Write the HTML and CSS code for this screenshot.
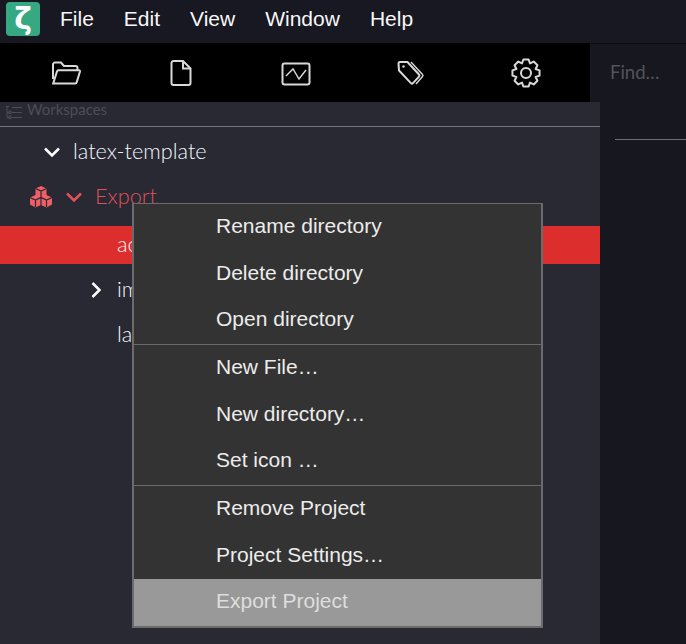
FILE: index.html
```html
<!DOCTYPE html>
<html lang="en">
  <head>
    <meta charset="UTF-8" />
    <meta name="viewport" content="width=device-width, initial-scale=1" />
    <title>Zettlr</title>
    <link rel="stylesheet" href="styles.css">
  </head>
  <body>
    <header class="menubar">
      <div class="logo">ζ</div>
      <nav class="menus">
        <span class="menu-title">File</span>
        <span class="menu-title">Edit</span>
        <span class="menu-title">View</span>
        <span class="menu-title">Window</span>
        <span class="menu-title">Help</span>
      </nav>
    </header>

    <div class="app">
      <div class="toolbar">
        <span class="tool">
          <svg width="32" height="28" viewBox="0 0 32 28"><path d="M3 20V5.500A2 2 0 0 1 5 3.500h6l3 3.500h11.500a2 2 0 0 1 2 2V11" /><path d="M3.200 24.500h22a1.500 1.500 0 0 0 1.500-1.200L30 12.500a1 1 0 0 0-1-1.200H8.500a1.500 1.500 0 0 0-1.500 1.100L3.200 24.500z" /></svg>
        </span>
        <span class="tool">
          <svg width="24" height="28" viewBox="0 0 24 28"><path d="M4.500 2h9.500l7.500 7.500V24a2 2 0 0 1-2 2h-15a2 2 0 0 1-2-2V4a2 2 0 0 1 2-2z" /><path d="M14 2v7.500h7.500" /></svg>
        </span>
        <span class="tool">
          <svg width="30" height="26" viewBox="0 0 30 26"><rect x="1.500" y="3.500" width="27" height="21" rx="2" /><path class="thin" d="M5 16l7-7 6 10 7-9" /></svg>
        </span>
        <span class="tool">
          <svg width="30" height="28" viewBox="0 0 30 28"><path d="M2.500 4.500a1.500 1.500 0 0 1 1.500-1.500h7.500l11.500 12.500a1.500 1.500 0 0 1 0 2.100l-6 6.500a1.500 1.500 0 0 1-2.100 0L3 11.500z" /><path class="thin" d="M15 3l11.500 12.500a1.500 1.500 0 0 1 0 2.100L20 25" /><circle class="dot" cx="7.500" cy="7.500" r="1.200" /></svg>
        </span>
        <span class="tool">
          <svg width="32" height="32" viewBox="-16 -16 32 32"><circle r="5" /><path stroke-linejoin="round" d="M-2.630 -13.550L2.630 -13.550L3.980 -9.610L7.720 -11.440L11.440 -7.720L9.610 -3.980L13.550 -2.630L13.550 2.630L9.610 3.980L11.440 7.720L7.720 11.440L3.980 9.610L2.630 13.550L-2.630 13.550L-3.980 9.610L-7.720 11.440L-11.440 7.720L-9.610 3.980L-13.550 2.630L-13.550 -2.630L-9.610 -3.980L-11.440 -7.720L-7.720 -11.440L-3.980 -9.610z" /></svg>
        </span>
      </div>

      <aside class="sidebar">
        <div class="side-head">
          <svg class="side-icon" width="18" height="15" viewBox="0 0 18 15"><path d="M1 1.500h3M2 1.500v11M7 2.500h10M2 7.500h2M7 7.500h10M2 12.500h2M7 12.500h10" /><rect x="4" y="6" width="2" height="2.500" /><rect x="4" y="11" width="2" height="2.500" /></svg>
          <span class="side-title">Workspaces</span>
        </div>
        <ul class="tree">
          <li class="row">
            <svg class="chev" width="18" height="12" viewBox="0 0 18 12"><path d="M2 2.500l7 7 7-7" /></svg>
            <span class="label">latex-template</span>
          </li>
          <li class="row project">
            <svg class="cubes" width="24" height="22" viewBox="0 0 24 22"><path class="fill" d="M12 0l5.500 2.500v6.500l5.500 2.500v7l-5.500 3-5.500-2.500-5.500 2.500-5.500-3v-7l5.500-2.500v-6.500z" /><path class="cut" d="M6.500 2.500l5.500 2.500 5.500-2.500M12 5v6M1 11.500l5.500 2.500 5.500-2.500 5.500 2.500 5.500-2.500M6.500 14v7M17.500 14v7M12 11.500v8" /></svg>
            <svg class="chev" width="18" height="12" viewBox="0 0 18 12"><path d="M2 2.500l7 7 7-7" /></svg>
            <span class="label">Export</span>
          </li>
          <li class="row child selected"><span class="label">acm.tex</span></li>
          <li class="row child">
            <svg class="chev-right" width="12" height="18" viewBox="0 0 12 18"><path d="M2.500 2l7 7-7 7" /></svg>
            <span class="label">img</span>
          </li>
          <li class="row child"><span class="label">latex.tex</span></li>
        </ul>
      </aside>

      <section class="panel">
        <div class="find">Find…</div>
      </section>
    </div>

    <div class="context-menu">
      <div class="group">
        <div class="item">Rename directory</div>
        <div class="item">Delete directory</div>
        <div class="item">Open directory</div>
      </div>
      <div class="group">
        <div class="item">New File…</div>
        <div class="item">New directory…</div>
        <div class="item">Set icon …</div>
      </div>
      <div class="group">
        <div class="item">Remove Project</div>
        <div class="item">Project Settings…</div>
        <div class="item active">Export Project</div>
      </div>
    </div>
  </body>
</html>
```

FILE: styles.css
```css
html,
body {
  height: 100%;
}
body {
  margin: 0;
  display: flex;
  flex-direction: column;
  overflow: hidden;
  background: #16171f;
  color: #f0f0f0;
  font-family: "Liberation Sans", Arial, sans-serif;
}
.menubar {
  display: flex;
  align-items: center;
  height: 43px;
  flex: none;
  padding-left: 6px;
  background: #171821;
}
.logo {
  width: 34px;
  height: 34px;
  margin-top: -6px;
  border-radius: 4px;
  background: #36a982;
  color: #fff;
  font-family: "DejaVu Sans", sans-serif;
  font-size: 30px;
  font-weight: bold;
  line-height: 34px;
  text-align: center;
}
.menus {
  display: flex;
  margin-top: -5px;
  margin-left: 5px;
}
.menu-title {
  padding: 0 15px;
  font-size: 21px;
  color: #f7f7f7;
}
.app {
  flex: 1;
  display: grid;
  grid-template-columns: 590px 10px 1fr;
  grid-template-rows: 59px 1fr;
}
.toolbar {
  grid-column: 1;
  grid-row: 1;
  z-index: 1;
  display: flex;
  align-items: center;
  padding-left: 8px;
  background: #000;
}
.tool {
  display: flex;
  justify-content: center;
  width: 115px;
}
.tool svg {
  fill: none;
  stroke: #d9d9d9;
  stroke-width: 2;
}
.tool .thin {
  stroke-width: 1.400;
}
.tool .dot {
  fill: #d9d9d9;
  stroke: none;
}
.sidebar {
  grid-column: 1 / 3;
  grid-row: 2;
  z-index: 1;
  background: #282932;
}
.side-head {
  display: flex;
  align-items: flex-start;
  gap: 4px;
  height: 24px;
  padding-left: 5px;
  border-bottom: 1px solid #73747a;
  color: #4c4d57;
  font-family: Lato, sans-serif;
  font-size: 15px;
}
.side-title {
  margin-top: -2px;
  line-height: 18px;
}
.side-icon {
  margin-top: 3px;
  fill: none;
  stroke: #4c4d57;
  stroke-width: 1;
}
.tree {
  list-style: none;
  margin: 6px 0 0 0;
  padding: 0;
  display: flex;
  flex-direction: column;
  gap: 7px;
}
.row {
  position: relative;
  display: flex;
  align-items: center;
  height: 38px;
  padding-left: 73px;
  font-family: Lato, sans-serif;
  font-size: 21.700px;
  font-weight: 300;
  color: #f4f8ff;
}
.label {
  margin-top: -3px;
}
.chev,
.chev-right,
.cubes {
  position: absolute;
  fill: none;
  stroke: #fff;
  stroke-width: 2.500;
}
.chev {
  left: 43px;
}
.project {
  color: #e0505a;
}
.project .chev {
  left: 65px;
  stroke: #e8505a;
}
.cubes {
  left: 29px;
  stroke: none;
}
.cubes .fill {
  fill: #ee6066;
}
.cubes .cut {
  fill: none;
  stroke: #282932;
  stroke-width: 1.200;
}
.project .label {
  margin-left: 22px;
}
.child {
  padding-left: 117px;
}
.chev-right {
  left: 90px;
}
.selected {
  margin-top: 3px;
  background: #dd2e2e;
  color: #f3f3f3;
}
.panel {
  grid-column: 2 / 4;
  grid-row: 1 / 3;
  padding: 0 0 0 25px;
  border-top: 1px solid #0b0b10;
  background: #16171f;
}
.find {
  height: 96px;
  padding-top: 17px;
  box-sizing: border-box;
  border-bottom: 1px solid #6c6d72;
  color: #53545c;
  font-family: Lato, sans-serif;
  font-size: 18.500px;
  text-indent: -5px;
}
.context-menu {
  position: absolute;
  z-index: 5;
  left: 132px;
  top: 203px;
  width: 407px;
  border: 2px solid #6b6b6b;
  border-width: 1px 2px 2px 2px;
  background: #333;
  font-size: 21px;
  color: #ececec;
}
.group + .group {
  border-top: 1px solid #6b6b6b;
}
.item {
  height: 46.670px;
  padding-left: 82px;
  line-height: 43px;
}
.item.active {
  background: #999;
  color: #dedede;
}
```
